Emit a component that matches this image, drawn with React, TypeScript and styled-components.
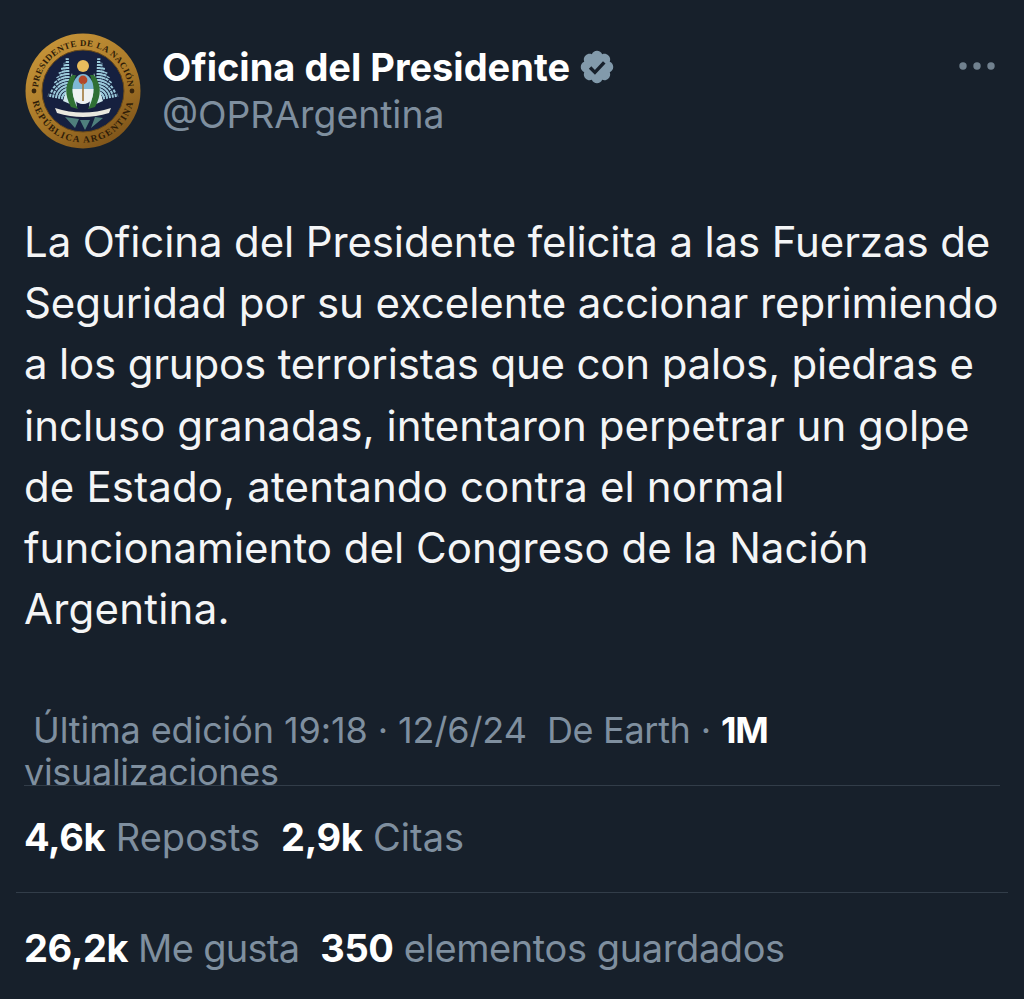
import React from 'react';
import styled, { createGlobalStyle } from 'styled-components';

const GlobalStyle = createGlobalStyle`
  html, body {
    margin: 0;
    padding: 0;
    background: #15202b;
  }
`;

const Page = styled.div`
  width: 1024px;
  height: 999px;
  overflow: hidden;
  background: #17202b;
  font-family: Inter, "Liberation Sans", sans-serif;
  -webkit-font-smoothing: antialiased;
`;

const Header = styled.header`
  display: flex;
  align-items: flex-start;
  padding: 33px 27px 0 25px;
  height: 114px;
`;

const Avatar = styled.svg`
  width: 116px;
  height: 116px;
  flex: none;
`;

const Names = styled.div`
  flex: 1;
  display: flex;
  flex-direction: column;
  margin: 9px 0 0 21px;
`;

const NameRow = styled.div`
  display: flex;
  align-items: center;
  gap: 8px;
  height: 50px;
`;

const Name = styled.span`
  color: #fff;
  font-size: 38px;
  font-weight: 700;
`;

const Handle = styled.span`
  color: #7f8f9f;
  font-size: 37.3px;
  line-height: 46px;
`;

const MoreIcon = styled.svg`
  width: 38px;
  height: 10px;
  margin-top: 28px;
  flex: none;
`;

const Body = styled.p`
  margin: 64px 0 0 24px;
  color: #f4f5f6;
  font-size: 42px;
  line-height: 61.2px;
  white-space: nowrap;
`;

const Line = styled.span<{ $tracking: number }>`
  display: block;
  letter-spacing: ${({ $tracking }) => $tracking}px;
`;

const Meta = styled.div`
  margin: 70px 24px 0;
  height: 76px;
  overflow: hidden;
  color: #7f8f9f;
  font-size: 36px;
  line-height: 42px;
  letter-spacing: -0.3px;
  white-space: nowrap;
  border-bottom: 1px solid #323d49;
`;

const MetaFirst = styled.div`
  padding-left: 9px;
  letter-spacing: -0.1px;
`;

const Source = styled.span`
  letter-spacing: -0.3px;
`;

const Strong = styled.b`
  color: #fff;
  font-weight: 700;
  letter-spacing: -0.4px;
`;

const Views = styled(Strong)`
  letter-spacing: -1.2px;
`;

const StatRow = styled.div<{ $top: number; $height: number }>`
  display: flex;
  align-items: flex-start;
  gap: 21px;
  height: ${({ $height }) => $height}px;
  margin: 0 16px;
  padding: ${({ $top }) => $top}px 0 0 8px;
  box-sizing: border-box;
`;

const Divided = styled(StatRow)`
  border-bottom: 1px solid #323d49;
`;

const Stat = styled.span<{ $tracking?: number }>`
  color: #7f8f9f;
  font-size: 38px;
  line-height: 48px;
  letter-spacing: ${({ $tracking }) => $tracking ?? 0}px;
  white-space: nowrap;
`;

const Seal = () => {
  const feathers = Array.from({ length: 9 }, (_, i) => i);
  return (
    <Avatar viewBox="0 0 116 116">
      <defs>
        <linearGradient id="gold" x1="0.2" y1="0" x2="0.8" y2="1">
          <stop offset="0" stopColor="#c8963a" />
          <stop offset="0.55" stopColor="#a87828" />
          <stop offset="1" stopColor="#7a5018" />
        </linearGradient>
        <path id="top" d="M13 58 A45 45 0 0 1 103 58" />
        <path id="bottom" d="M6.500 58 A51.500 51.500 0 0 0 109.500 58" />
      </defs>
      <circle cx="58" cy="58" r="57.500" fill="url(#gold)" />
      <circle cx="58" cy="58" r="41" fill="#16203f" stroke="#6b4a18" strokeWidth="1" />
      <text fontFamily="Liberation Serif, serif" fontSize="8.800" fill="#2e1c08" fontWeight="700" letterSpacing="0.5">
        <textPath href="#top" startOffset="50%" textAnchor="middle">PRESIDENTE DE LA NACIÓN</textPath>
      </text>
      <text fontFamily="Liberation Serif, serif" fontSize="9.400" fill="#2e1c08" fontWeight="700" letterSpacing="1.400">
        <textPath href="#bottom" startOffset="50%" textAnchor="middle">REPÚBLICA ARGENTINA</textPath>
      </text>
      <circle cx="9" cy="58" r="2.400" fill="#3a260c" />
      <circle cx="107" cy="58" r="2.400" fill="#3a260c" />
      {feathers.map((i) => (
        <g key={i}>
          <line x1="44" y1="66" x2={23 + i * 2.4} y2={62 - i * 4.6} stroke="#9ccbdc" strokeWidth="3.200" strokeDasharray="2 1" />
          <line x1="72" y1="66" x2={93 - i * 2.4} y2={62 - i * 4.6} stroke="#9ccbdc" strokeWidth="3.200" strokeDasharray="2 1" />
        </g>
      ))}
      <path d="M38 68 L47 40 L52 74 Z M78 68 L69 40 L64 74 Z" fill="#cfe6ec" />
      <circle cx="58" cy="33" r="6" fill="#e8bc5d" />
      <path d="M47 42 Q36 56 46 74 L53 76 Q44 60 51 42 Z" fill="#2f7034" />
      <path d="M69 42 Q80 56 70 74 L63 76 Q72 60 65 42 Z" fill="#2f7034" />
      <ellipse cx="58" cy="56" rx="10.500" ry="15" fill="#7fb8d6" />
      <path d="M47.500 56 H68.500 Q68.500 71 58 71 Q47.500 71 47.500 56 Z" fill="#eef2f2" />
      <circle cx="58" cy="47" r="4.400" fill="#b3472a" />
      <line x1="58" y1="50" x2="58" y2="68" stroke="#a0783a" strokeWidth="1.600" />
      <path d="M30 75 Q58 84 86 75 L84 80 Q58 88 32 80 Z" fill="#e9e8df" />
      <path d="M40 84 L50 95 L54 86 Z M55 87 L60 97 L65 87 Z M70 84 L66 95 L78 85 Z" fill="#4f7f7c" />
    </Avatar>
  );
};

const VerifiedBadge = () => (
  <svg width="38" height="38" viewBox="0 0 22 22">
    <path
      fill="#829aab"
      d="M20.4 11c0-1.3-.8-2.5-2-3 .5-1.300.2-2.700-.8-3.600-.9-1-2.300-1.300-3.600-.8-.5-1.200-1.700-2-3-2s-2.500.8-3 2c-1.300-.5-2.700-.2-3.600.8-1 .9-1.300 2.300-.8 3.600-1.200.5-2 1.700-2 3s.8 2.500 2 3c-.5 1.300-.2 2.700.8 3.600.9 1 2.300 1.300 3.600.8.5 1.200 1.700 2 3 2s2.500-.8 3-2c1.300.5 2.700.2 3.600-.8 1-.9 1.300-2.300.8-3.600 1.200-.5 2-1.700 2-3z"
    />
    <path d="M7 11.300l2.800 2.800L15.200 8.300" fill="none" stroke="#17202b" strokeWidth="2" />
  </svg>
);

const lines = [
  { text: 'La Oficina del Presidente felicita a las Fuerzas de', tracking: -0.12 },
  { text: 'Seguridad por su excelente accionar reprimiendo', tracking: -0.08 },
  { text: 'a los grupos terroristas que con palos, piedras e', tracking: -0.18 },
  { text: 'incluso granadas, intentaron perpetrar un golpe', tracking: 0.02 },
  { text: 'de Estado, atentando contra el normal', tracking: 0.14 },
  { text: 'funcionamiento del Congreso de la Nación', tracking: 0.02 },
  { text: 'Argentina.', tracking: 0.22 },
];

const App = () => (
  <Page>
    <GlobalStyle />
    <Header>
      <Seal />
      <Names>
        <NameRow>
          <Name>Oficina del Presidente</Name>
          <VerifiedBadge />
        </NameRow>
        <Handle>@OPRArgentina</Handle>
      </Names>
      <MoreIcon viewBox="0 0 38 10">
        <circle cx="4" cy="5" r="3.7" fill="#71818f" />
        <circle cx="18" cy="5" r="3.7" fill="#71818f" />
        <circle cx="32" cy="5" r="3.7" fill="#71818f" />
      </MoreIcon>
    </Header>
    <Body>
      {lines.map((line) => (
        <Line key={line.text} $tracking={line.tracking}>{line.text}</Line>
      ))}
    </Body>
    <Meta>
      <MetaFirst>
        Última edición 19:18 · 12/6/24&nbsp; <Source>De Earth</Source> · <Views>1M</Views>
      </MetaFirst>
      <div>visualizaciones</div>
    </Meta>
    <Divided $top={27} $height={107}>
      <Stat><Strong>4,6k</Strong> Reposts</Stat>
      <Stat><Strong>2,9k</Strong> Citas</Stat>
    </Divided>
    <StatRow $top={31} $height={106}>
      <Stat $tracking={-0.72}><Strong>26,2k</Strong> Me gusta</Stat>
      <Stat $tracking={-0.4}><Strong>350</Strong> elementos guardados</Stat>
    </StatRow>
  </Page>
);

export default App;
